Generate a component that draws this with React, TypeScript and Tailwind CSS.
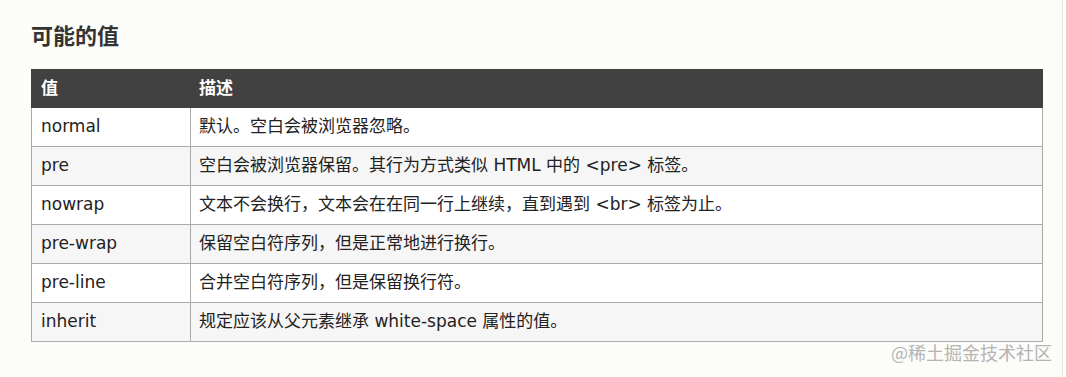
import React from "react";

const rows: [string, string][] = [
  ["normal", "默认。空白会被浏览器忽略。"],
  ["pre", "空白会被浏览器保留。其行为方式类似 HTML 中的 <pre> 标签。"],
  ["nowrap", "文本不会换行，文本会在在同一行上继续，直到遇到 <br> 标签为止。"],
  ["pre-wrap", "保留空白符序列，但是正常地进行换行。"],
  ["pre-line", "合并空白符序列，但是保留换行符。"],
  ["inherit", "规定应该从父元素继承 white-space 属性的值。"],
];

const font = {
  fontFamily: '"DejaVu Sans", Verdana, "Noto Sans CJK SC", sans-serif',
};

export default function App() {
  return (
    <div className="relative flex h-[377px] w-[1066px] overflow-hidden bg-[#fcfcf9] text-[#222]" style={font}>
      <div className="w-[1063px] shrink-0 border-r border-[#e4e4e0] pl-[31px] pt-[22px]">
        <h2 className="mb-[17px] text-[22px] font-bold leading-[30px] text-[#333]">可能的值</h2>
        <table className="w-[1012px] border-collapse text-[17px]">
          <thead>
            <tr className="h-[38px] bg-[#414141] text-left text-white">
              <th className="w-[159px] border border-[#414141] px-[9px] font-bold">值</th>
              <th className="border border-[#414141] px-[8px] font-bold">描述</th>
            </tr>
          </thead>
          <tbody>
            {rows.map(([k, v], i) => (
              <tr key={k} className={i % 2 === 0 ? "h-[39px] bg-white" : "h-[39px] bg-[#f6f6f6]"}>
                <td className="border border-[#aaaaaa] px-[9px]">{k}</td>
                <td className="border border-[#aaaaaa] px-[8px]">{v}</td>
              </tr>
            ))}
          </tbody>
        </table>
      </div>
      <div className="flex-1 bg-[#fdfdfb]" />
      <div className="absolute left-[891px] top-[340px] text-[18px] leading-[24px] text-[#b4b4b4]" style={{ fontFamily: '"Noto Sans CJK SC", sans-serif' }}>
        @稀土掘金技术社区
      </div>
    </div>
  );
}
